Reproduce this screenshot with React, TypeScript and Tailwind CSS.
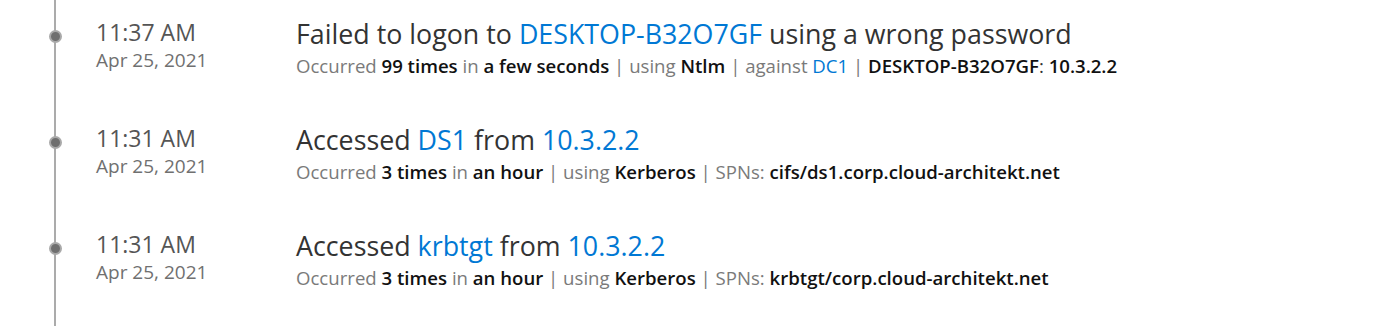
const font = { fontFamily: '"Open Sans", "Noto Sans", sans-serif' };

type Part = { t: string; k?: "link" | "bold" | "muted" | "plain" };

type Event = {
  time: string;
  date: string;
  title: Part[];
  detail: Part[];
};

const events: Event[] = [
  {
    time: "11:37 AM",
    date: "Apr 25, 2021",
    title: [
      { t: "Failed to logon to " },
      { t: "DESKTOP-B32O7GF", k: "link" },
      { t: " using a wrong password" },
    ],
    detail: [
      { t: "Occurred ", k: "muted" },
      { t: "99 times", k: "bold" },
      { t: " in ", k: "muted" },
      { t: "a few seconds", k: "bold" },
      { t: " | using ", k: "muted" },
      { t: "Ntlm", k: "bold" },
      { t: " | against ", k: "muted" },
      { t: "DC1", k: "link" },
      { t: " | ", k: "muted" },
      { t: "DESKTOP-B32O7GF", k: "bold" },
      { t: ": ", k: "plain" },
      { t: "10.3.2.2", k: "bold" },
    ],
  },
  {
    time: "11:31 AM",
    date: "Apr 25, 2021",
    title: [
      { t: "Accessed " },
      { t: "DS1", k: "link" },
      { t: " from " },
      { t: "10.3.2.2", k: "link" },
    ],
    detail: [
      { t: "Occurred ", k: "muted" },
      { t: "3 times", k: "bold" },
      { t: " in ", k: "muted" },
      { t: "an hour", k: "bold" },
      { t: " | using ", k: "muted" },
      { t: "Kerberos", k: "bold" },
      { t: " | SPNs: ", k: "muted" },
      { t: "cifs/ds1.corp.cloud-architekt.net", k: "bold" },
    ],
  },
  {
    time: "11:31 AM",
    date: "Apr 25, 2021",
    title: [
      { t: "Accessed " },
      { t: "krbtgt", k: "link" },
      { t: " from " },
      { t: "10.3.2.2", k: "link" },
    ],
    detail: [
      { t: "Occurred ", k: "muted" },
      { t: "3 times", k: "bold" },
      { t: " in ", k: "muted" },
      { t: "an hour", k: "bold" },
      { t: " | using ", k: "muted" },
      { t: "Kerberos", k: "bold" },
      { t: " | SPNs: ", k: "muted" },
      { t: "krbtgt/corp.cloud-architekt.net", k: "bold" },
    ],
  },
];

function Span({ p }: { p: Part }) {
  if (p.k === "link") return <span className="text-[#0078d4]">{p.t}</span>;
  if (p.k === "bold") return <span className="font-semibold text-[#111]">{p.t}</span>;
  if (p.k === "muted") return <span className="text-[#7a7a7a]">{p.t}</span>;
  if (p.k === "plain") return <span className="text-[#333]">{p.t}</span>;
  return <span>{p.t}</span>;
}

function Row({ e }: { e: Event }) {
  return (
    <div className="relative flex h-[106px] pt-[15px]">
      {/* dot on the line */}
      <span className="absolute left-[-7.5px] top-[30px] h-[13px] w-[13px] rounded-full border-2 border-[#a9a9a9] bg-[#6f6f6f]" />
      <div className="w-[240px] pl-[40px] pt-[2px]">
        <div className="text-[23px] leading-[30px] text-[#555]">{e.time}</div>
        <div className="mt-[1px] text-[19px] leading-[25px] text-[#707070]">{e.date}</div>
      </div>
      <div>
        <div className="whitespace-nowrap text-[26.8px] leading-[37px] text-[#333]">
          {e.title.map((p, i) => (
            <Span key={i} p={p} />
          ))}
        </div>
        <div className="whitespace-nowrap text-[18.6px] leading-[27px]">
          {e.detail.map((p, i) => (
            <Span key={i} p={p} />
          ))}
        </div>
      </div>
    </div>
  );
}

export default function App() {
  return (
    <div className="h-[326px] w-[1378px] bg-white" style={font}>
      <div className="ml-[54px] h-full border-l-2 border-[#ababab]">
        {events.map((e, i) => (
          <Row key={i} e={e} />
        ))}
      </div>
    </div>
  );
}
